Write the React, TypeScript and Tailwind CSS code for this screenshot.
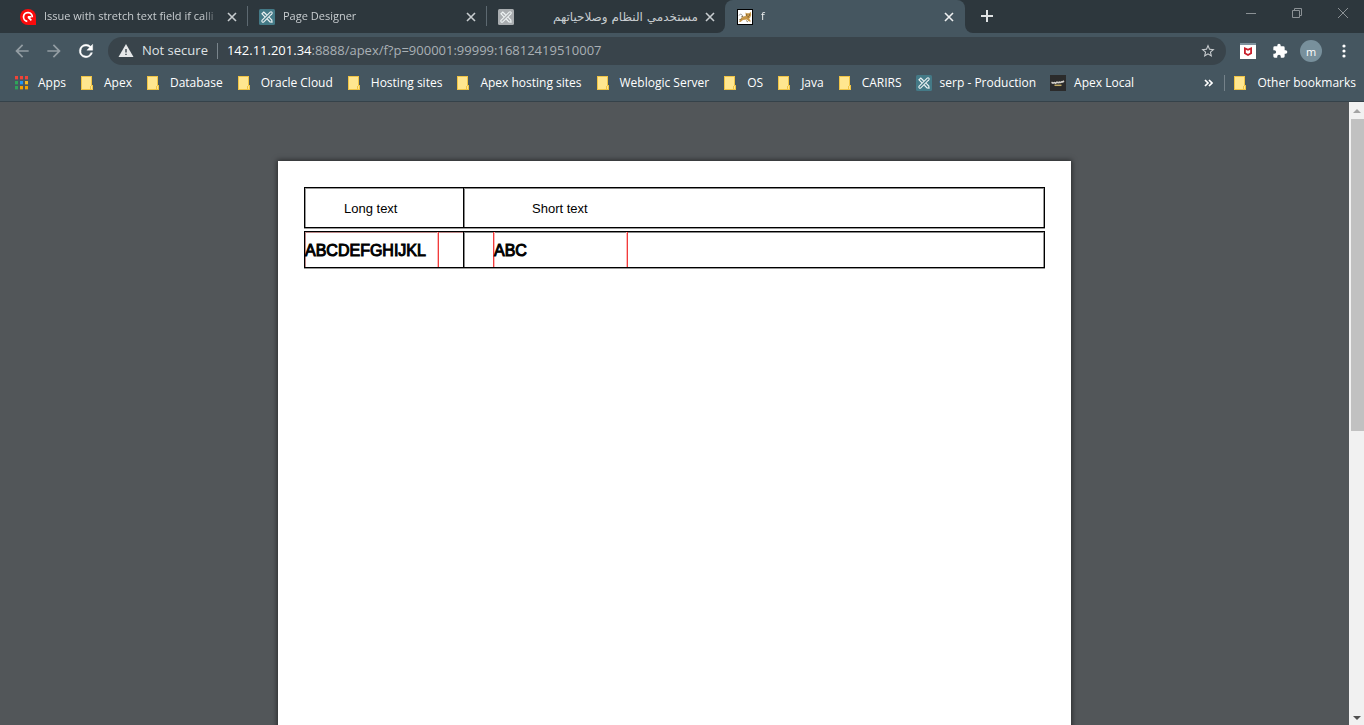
import type { ReactNode } from "react";

function Folder() {
  return (
    <svg width="16" height="16" viewBox="0 0 16 16" shapeRendering="crispEdges" aria-hidden="true">
      <path d="M1 1h11v9h1v5H1z" fill="#f0c445" />
      <path d="M2 2h9v9h-1v3H2z" fill="#ffe68f" />
      <path d="M11 11h1v3h-1z" fill="#ffe68f" />
    </svg>
  );
}

function ApexIcon({ muted = false }: { muted?: boolean }) {
  const bg = muted ? "#a9adb0" : "#447a87";
  return (
    <svg width="16" height="16" viewBox="0 0 16 16" aria-hidden="true">
      <rect width="16" height="16" rx="1.5" fill={bg} />
      <g fill="none" stroke="#eef3f4" strokeLinecap="round">
        <path d="M4 12 12 4" strokeWidth="3.4" />
        <path d="M4 12 12 4" stroke={bg} strokeWidth="1.3" />
        <path d="M5.500 7.300 3 4.800 4.800 3 7.300 5.500" strokeWidth="1.200" />
        <path d="M8.700 10.500 11 12.800 13 13 12.800 11 10.500 8.700" strokeWidth="1.200" />
      </g>
    </svg>
  );
}

function QuestionLogo() {
  return (
    <svg width="16" height="16" viewBox="0 0 16 16" aria-hidden="true">
      <path d="M8 0a8 8 0 0 1 8 8v8H8A8 8 0 0 1 8 0z" fill="#fb0a0c" />
      <path d="M7.300 12.300A4.400 4.400 0 1 1 12.300 8.300" fill="none" stroke="#fff" strokeWidth="1.700" />
      <path d="M11.300 7.900H7.800M8 8.100l3.400 3.300" fill="none" stroke="#fff" strokeWidth="1.600" />
    </svg>
  );
}

function CatIcon() {
  return (
    <svg width="16" height="16" viewBox="0 0 16 16" aria-hidden="true">
      <path d="M0 0h16v16H0z" fill="#000" />
      <path d="M1 1h14v14H1z" fill="#fff" />
      <path d="M2 6.500c1-2 3-1.500 3.500.5s1 1.500 2 1" fill="none" stroke="#777" strokeWidth=".8" />
      <path d="M8.500 3.500l1.200.8h2.500L13.800 2.800l.4 3.200-1 2.500-1 1 1.800 3H12L9.800 10.500 6 11l-2.500 2H2l2-3.800L6.500 7.500 8.800 7z" fill="#c79748" />
      <path d="M9 5.500h1.200v1H9zM12 5.500h1v1h-1zM10.500 7.500H12v.8h-1.500z" fill="#5b4424" />
      <path d="M2 11l2.500-1M9 11.500l2 1.500M4 8l2-.5" stroke="#6d5730" strokeWidth=".7" />
    </svg>
  );
}

function AppsIcon() {
  const colors = ["#f04438", "#f04438", "#f04438", "#2fa35a", "#2196f3", "#f5b921", "#2fa35a", "#f5a100", "#f5a100"];
  return (
    <svg width="16" height="16" viewBox="0 0 16 16" shapeRendering="crispEdges" aria-hidden="true">
      {colors.map((c, i) => (
        <g key={i}>
          <rect x={1 + (i % 3) * 5} y={1 + Math.floor(i / 3) * 5} width="3" height="3" fill={c} />
          <rect x={1 + (i % 3) * 5} y={4 + Math.floor(i / 3) * 5} width="3" height="1" fill={c} opacity=".35" />
        </g>
      ))}
    </svg>
  );
}

function LocalIcon() {
  return (
    <svg width="16" height="16" viewBox="0 0 16 16" aria-hidden="true">
      <path d="M0 0h16v16H0z" fill="#2b2b2b" />
      <path d="M1.500 7.300l1.500.9 1.500-.6 1 .6 1.500-1 1.300.5 1.200-.5.9.3 1.600-.5v-1M12.500 7l1.500-1" fill="none" stroke="#d5d2cc" strokeWidth="1.600" />
      <path d="M4.500 10.300h7" stroke="#c2ab65" strokeWidth="1.500" />
    </svg>
  );
}

function Cross() {
  return (
    <svg width="10" height="10" viewBox="0 0 10 10" aria-hidden="true">
      <path d="M1 1l8 8M9 1L1 9" stroke="currentColor" strokeWidth="1.6" />
    </svg>
  );
}

type TabProps = { icon: ReactNode; title: string; rtl?: boolean; active?: boolean; divider?: boolean };

function Tab({ icon, title, rtl, active, divider }: TabProps) {
  return (
    <div
      className={
        active
          ? "relative flex h-full w-60 min-w-0 items-center rounded-t-lg bg-[#455660] pr-2 pl-3 text-[#eef0f1]"
          : "relative flex h-full w-[239px] min-w-0 items-center pr-[7px] pl-3 text-[#c8cdd0]"
      }
    >
      <span className="mr-2 shrink-0">{icon}</span>
      <button
        type="button"
        role="tab"
        aria-selected={!!active}
        dir={rtl ? "rtl" : "ltr"}
        className={
          rtl
            ? 'mr-1 min-w-0 flex-1 overflow-hidden text-start font-["DejaVu_Sans",sans-serif] text-xs whitespace-nowrap'
            : "mr-1 min-w-0 flex-1 overflow-hidden mask-r-from-90% text-start text-[11px] whitespace-nowrap"
        }
      >
        {title}
      </button>
      <button type="button" aria-label={`Close ${title}`} className="flex size-4 shrink-0 items-center justify-center">
        <Cross />
      </button>
      {divider && <span className="absolute top-1.5 -right-px h-5 w-px bg-[#5d6971]" />}
      {active && (
        <>
          <span className="absolute bottom-0 -left-2 size-2 bg-[#455660]">
            <span className="block size-2 rounded-br-lg bg-[#2d373d]" />
          </span>
          <span className="absolute -right-2 bottom-0 size-2 bg-[#455660]">
            <span className="block size-2 rounded-bl-lg bg-[#2d373d]" />
          </span>
        </>
      )}
    </div>
  );
}

function TabStrip() {
  return (
    <header className="flex h-[33px] items-start bg-[#2d373d] pl-2">
      <div role="tablist" className="flex h-full min-w-0">
        <Tab icon={<QuestionLogo />} title="Issue with stretch text field if calli" divider />
        <Tab icon={<ApexIcon />} title="Page Designer" divider />
        <Tab icon={<ApexIcon muted />} title="مستخدمي النظام وصلاحياتهم" rtl />
        <Tab icon={<CatIcon />} title="f" active />
      </div>
      <button type="button" aria-label="New tab" className="ml-2 flex h-8 w-7 shrink-0 items-center justify-center">
        <svg width="12" height="12" viewBox="0 0 12 12" aria-hidden="true">
          <path d="M6 0v12M0 6h12" stroke="#dfe2e3" strokeWidth="2" />
        </svg>
      </button>
      <div className="-mr-0.5 ml-auto flex h-[26px] text-[#8b9195]">
        <button type="button" aria-label="Minimize" className="flex w-[46px] items-center justify-center">
          <svg width="10" height="10" viewBox="0 0 10 10" aria-hidden="true"><path d="M0 5.500h10" stroke="currentColor" /></svg>
        </button>
        <button type="button" aria-label="Restore" className="flex w-[46px] items-center justify-center">
          <svg width="10" height="10" viewBox="0 0 10 10" fill="none" stroke="currentColor" aria-hidden="true">
            <path d="M.5 2.500h7v7h-7zM2.500 2.500v-2h7v7h-2" />
          </svg>
        </button>
        <button type="button" aria-label="Close window" className="flex w-[46px] items-center justify-center">
          <svg width="10" height="10" viewBox="0 0 10 10" aria-hidden="true"><path d="M0 0l10 10M10 0L0 10" stroke="currentColor" /></svg>
        </button>
      </div>
    </header>
  );
}

const arrow = "M20 11H7.830l5.590-5.590L12 4l-8 8 8 8 1.410-1.410L7.830 13H20v-2z";

function Toolbar() {
  return (
    <div className="flex h-9 items-center bg-[#455660] pr-3 pl-3">
      <div className="flex gap-3">
        <button type="button" aria-label="Back" className="size-5">
          <svg viewBox="0 0 24 24" className="size-5 fill-[#939da3]" aria-hidden="true"><path d={arrow} /></svg>
        </button>
        <button type="button" aria-label="Forward" className="size-5">
          <svg viewBox="0 0 24 24" className="size-5 rotate-180 fill-[#939da3]" aria-hidden="true"><path d={arrow} /></svg>
        </button>
        <button type="button" aria-label="Reload" className="size-5">
          <svg viewBox="0 0 24 24" className="size-5 fill-white stroke-white" strokeWidth=".5" aria-hidden="true">
            <path d="M17.650 6.350A7.958 7.958 0 0 0 12 4a8 8 0 1 0 7.730 10h-2.080A6 6 0 1 1 12 6c1.660 0 3.140.69 4.220 1.780L13 11h7V4l-2.350 2.350z" />
          </svg>
        </button>
      </div>
      <div className="ml-3 flex h-7 min-w-0 flex-1 items-center rounded-full bg-[#39444b] px-2.5 text-[13px]">
        <svg viewBox="0 0 16 14" className="h-3.5 w-4 shrink-0" aria-hidden="true">
          <path d="M8 0l7.500 13H.5z" fill="#e6e8e9" />
          <path d="M7.300 5h1.400v3.500H7.300zM7.300 9.700h1.400v1.400H7.300z" fill="#39444b" />
        </svg>
        <span className="ml-2 shrink-0 text-[#dfe2e4]">Not secure</span>
        <span className="mx-[9px] h-4 w-px shrink-0 bg-[#7a858c]" />
        <label htmlFor="address" className="shrink-0 text-white">142.11.201.34</label>
        <input
          id="address"
          type="text"
          defaultValue=":8888/apex/f?p=900001:99999:16812419510007"
          className="min-w-0 flex-1 bg-transparent text-[#a9b0b5] outline-none"
        />
        <button type="button" aria-label="Bookmark this page" className="size-4 shrink-0">
          <svg viewBox="0 0 24 24" className="size-4 fill-[#c9cdd0]" aria-hidden="true">
            <path d="M22 9.240l-7.190-.62L12 2 9.190 8.630 2 9.240l5.460 4.730L5.820 21 12 17.270 18.180 21l-1.630-7.030L22 9.240zM12 15.400l-3.760 2.270 1-4.280-3.320-2.880 4.380-.38L12 6.100l1.710 4.040 4.380.38-3.320 2.880 1 4.280L12 15.400z" />
          </svg>
        </button>
      </div>
      <div className="ml-3.5 flex items-center">
        <button type="button" aria-label="McAfee WebAdvisor" className="size-4">
          <svg width="16" height="16" viewBox="0 0 16 16" aria-hidden="true">
            <path d="M0 0h16v16H0z" fill="#fff" />
            <path d="M0 0h16v2H0z" fill="#7f929d" />
            <path d="M4 4l4 1.800L12 4v6.800l-4 2.200-4-2.200z" fill="#c8202c" />
            <path d="M5.800 6.700L8 7.800l2.200-1.100v3L8 11 5.800 9.700z" fill="#fff" />
          </svg>
        </button>
        <button type="button" aria-label="Extensions" className="ml-4 size-4">
          <svg viewBox="0 0 24 24" className="size-4 fill-white" aria-hidden="true">
            <path d="M20.500 11H19V7a2 2 0 0 0-2-2h-4V3.500a2.500 2.500 0 0 0-5 0V5H4a2 2 0 0 0-2 2v3.800h1.500a2.700 2.700 0 0 1 0 5.400H2V20a2 2 0 0 0 2 2h3.800v-1.500a2.700 2.700 0 0 1 5.400 0V22H17a2 2 0 0 0 2-2v-4h1.500a2.500 2.500 0 0 0 0-5z" />
          </svg>
        </button>
        <button type="button" aria-label="Profile" className="ml-3 flex size-[22px] items-center justify-center rounded-full bg-[#78909c] text-[11px] leading-none text-white">
          m
        </button>
        <button type="button" aria-label="Menu" className="ml-3.5 flex size-4 items-center justify-center">
          <svg width="4" height="14" viewBox="0 0 4 14" fill="#fff" aria-hidden="true">
            <circle cx="2" cy="2" r="1.600" /><circle cx="2" cy="7" r="1.600" /><circle cx="2" cy="12" r="1.600" />
          </svg>
        </button>
      </div>
    </div>
  );
}

const bookmarks: { label: string; icon: ReactNode }[] = [
  { label: "Apps", icon: <AppsIcon /> },
  { label: "Apex", icon: <Folder /> },
  { label: "Database", icon: <Folder /> },
  { label: "Oracle Cloud", icon: <Folder /> },
  { label: "Hosting sites", icon: <Folder /> },
  { label: "Apex hosting sites", icon: <Folder /> },
  { label: "Weblogic Server", icon: <Folder /> },
  { label: "OS", icon: <Folder /> },
  { label: "Java", icon: <Folder /> },
  { label: "CARIRS", icon: <Folder /> },
  { label: "serp - Production", icon: <ApexIcon /> },
  { label: "Apex Local", icon: <LocalIcon /> },
];

function BookmarksBar() {
  return (
    <nav aria-label="Bookmarks" className="flex h-[33px] items-start border-b border-[#35424a] bg-[#455660] pr-2 pl-3.5 text-xs text-white">
      <div className="flex h-7 min-w-0 items-center gap-3.5">
        {bookmarks.map((b) => (
          <a key={b.label} href="#" className="flex shrink-0 items-center gap-2 whitespace-nowrap">
            {b.icon}
            {b.label}
          </a>
        ))}
      </div>
      <div className="ml-auto flex h-7 shrink-0 items-center">
        <button type="button" aria-label="More bookmarks" className="flex h-4 w-3 items-center">
          <svg width="9" height="8" viewBox="0 0 9 8" fill="none" stroke="#fff" strokeWidth="1.700" aria-hidden="true">
            <path d="M1 1l3 3-3 3M5 1l3 3-3 3" />
          </svg>
        </button>
        <span className="mx-2 h-4 w-px bg-[#75828a]" />
        <a href="#" className="flex items-center gap-2 whitespace-nowrap">
          <Folder />
          Other bookmarks
        </a>
      </div>
    </nav>
  );
}

function Report() {
  return (
    <table className='w-full table-fixed border-separate border-spacing-x-0 border-spacing-y-[3px] font-["Liberation_Sans",Arial,sans-serif] text-black'>
      <colgroup>
        <col className="w-[160px]" />
        <col />
      </colgroup>
      <thead>
        <tr className="h-[41px] text-left text-[13px]">
          <th scope="col" className="border border-black pt-0.5 pl-[39px] font-normal shadow-[inset_1px_1px_0_#999,0_1px_0_#999]">Long text</th>
          <th scope="col" className="border border-l-0 border-black pt-0.5 pl-[68px] font-normal shadow-[inset_1px_1px_0_#888,inset_-1px_0_0_#999,0_1px_0_#999]">Short text</th>
        </tr>
      </thead>
      <tbody>
        <tr className="text-base [-webkit-text-stroke:1px_#000]">
          <td className="border border-black p-0 shadow-[inset_1px_1px_0_#b88,0_1px_0_#999]">
            <div className="flex h-[35px] w-[134px] items-center border-r border-[#f03c3c] pt-0.5 shadow-[inset_-1px_0_0_#ffb8b8]">ABCDEFGHIJKL</div>
          </td>
          <td className="border border-l-0 border-black p-0 pl-[29px] shadow-[inset_1px_1px_0_#888,inset_-1px_0_0_#999,0_1px_0_#999]">
            <div className="flex h-[35px] w-[135px] items-center border-r border-l border-[#f03c3c] pt-0.5 shadow-[inset_1px_0_0_#ffb8b8,inset_-1px_0_0_#ffb8b8]">ABC</div>
          </td>
        </tr>
      </tbody>
    </table>
  );
}

function Viewer() {
  return (
    <main className="flex min-h-0 flex-1 bg-[#525659]">
      <div className="flex min-w-0 flex-1 justify-center overflow-hidden pt-[59px]">
        <article className="h-[1122px] w-[793px] bg-white px-[26px] pt-[23px] shadow-[0_0_5px_1px_rgba(0,0,0,0.5)]">
          <Report />
        </article>
      </div>
      <div className="flex w-[15px] shrink-0 flex-col items-center bg-[#f1f1f1]">
        <svg width="15" height="17" viewBox="0 0 15 17" className="shrink-0" aria-hidden="true">
          <path d="M4 11l4-4 4 4z" fill="#a3a3a3" />
        </svg>
        <div className="h-1/2 w-[13px] self-end bg-[#c1c1c1]" />
        <svg width="15" height="17" viewBox="0 0 15 17" className="mt-auto shrink-0" aria-hidden="true">
          <path d="M4 8l4 4 4-4z" fill="#505050" />
        </svg>
      </div>
    </main>
  );
}

export default function App() {
  return (
    <div className='flex h-screen flex-col overflow-hidden font-["Open_Sans","Noto_Sans",sans-serif]'>
      <TabStrip />
      <Toolbar />
      <BookmarksBar />
      <Viewer />
    </div>
  );
}
